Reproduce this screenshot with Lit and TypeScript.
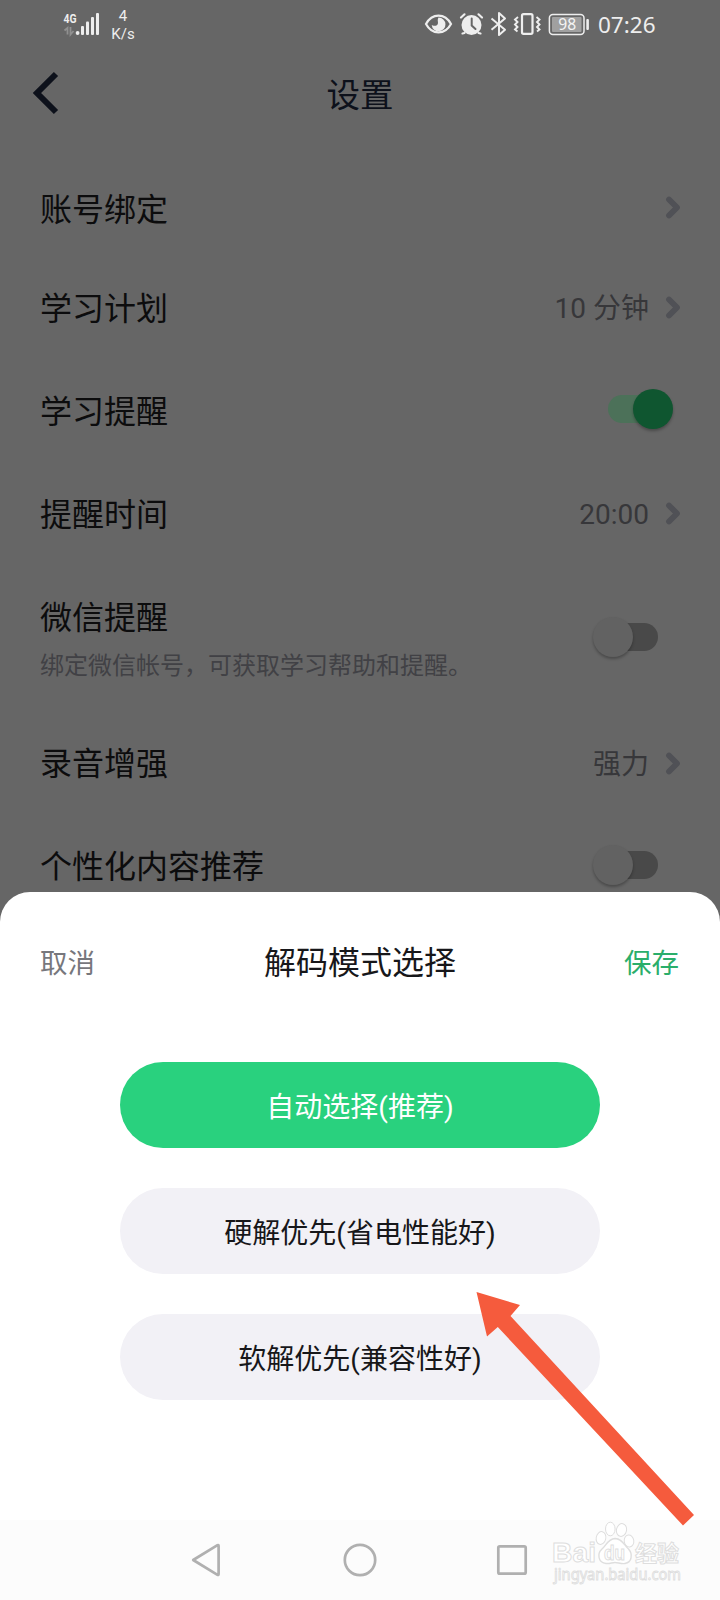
import { LitElement, html, css, nothing } from "lit";
import { customElement, property } from "lit/decorators.js";

@customElement("status-bar")
class StatusBar extends LitElement {
  static styles = css`
    :host { display: flex; height: 48px; align-items: flex-start; justify-content: space-between; color: #eee; }
    .left, .right { display: flex; align-items: flex-start; }
    .left { padding-left: 62px; }
    .right { padding-right: 65px; }
    svg { display: block; }
    .speed { width: 26px; margin: 7px 0 0 8px; font: 15px/18px Roboto, sans-serif; text-align: center; }
    .time { width: 57px; margin-left: 5px; font: 22.5px/30px "Noto Sans", sans-serif; padding-top: 10px; white-space: nowrap; }
    .net { font: bold 13px Roboto, sans-serif; }
    .pct { font: 16.5px "Noto Sans", sans-serif; }
  `;
  render() {
    return html`
      <div class="left">
        <svg width="40" height="48" viewBox="62 0 40 48" fill="#eee">
          <text class="net" x="63.5" y="23" textLength="13" lengthAdjust="spacingAndGlyphs">4G</text>
          <path d="M67.5 34.500V28L64.500 30.500M70.500 27V34.500L73.500 31" fill="none" stroke="#909090" stroke-width="1.800"/>
          <circle cx="77.600" cy="33" r="1.900"/>
          <rect x="81" y="26" width="3" height="9" rx="1"/>
          <rect x="86" y="21.500" width="3" height="13.500" rx="1"/>
          <rect x="91" y="17" width="3" height="18" rx="1"/>
          <rect x="96" y="13" width="3" height="22" rx="1"/>
        </svg>
        <div class="speed">4<br />K/s</div>
      </div>
      <div class="right">
        <svg width="31" height="48" viewBox="424 0 31 48">
          <path d="M426 24C432 12.800 445 12.800 451 24C445 35.200 432 35.200 426 24Z" fill="none" stroke="#eee" stroke-width="2.200"/>
          <path d="M438.500 17.500a6.900 6.900 0 1 1-6.800 7.500c1.500 1.300 6.300 1.300 6.300-2c0-2-.8-3.500.5-5.500z" fill="#eee"/>
        </svg>
        <svg width="33" height="48" viewBox="455 0 33 48" fill="none" stroke="#eee" stroke-width="2.200" stroke-linecap="round">
          <circle cx="471.500" cy="25" r="10" fill="#eee" stroke="none"/>
          <path d="M461 17.500l3.500-3.200M482 17.500l-3.500-3.200M464.500 33l-2 .5M478.500 33l2 .5"/>
          <path d="M471.700 18.500V25.500L475.500 29" stroke="#666" stroke-width="2"/>
        </svg>
        <svg width="22" height="48" viewBox="488 0 22 48" fill="none" stroke="#eee" stroke-width="2" stroke-linejoin="round">
          <path d="M491.500 18.500L505 29.800L499 35V13L505 18.500L491.500 29.800"/>
        </svg>
        <svg width="34" height="48" viewBox="510 0 34 48" fill="none" stroke="#eee">
          <rect x="522" y="14.200" width="10.500" height="19.600" rx="1.500" stroke-width="2.200"/>
          <path d="M518 17l-3 2.500l2.500 2.500l-2.500 2.500l2.500 2.500l-2.500 2.500l2.500 2M536.500 17l3 2.500l-2.500 2.500l2.500 2.500l-2.500 2.500l2.500 2.500l-2.500 2" stroke-width="1.900"/>
        </svg>
        <svg width="49" height="48" viewBox="544 0 49 48">
          <rect x="549.400" y="14.400" width="34.600" height="20" rx="3.500" fill="#666" stroke="#eee" stroke-width="1.500"/>
          <rect x="552" y="17" width="29.500" height="15" rx="1" fill="#a0a0a0"/>
          <rect x="586.300" y="19" width="2.600" height="11" rx="1" fill="#eee"/>
          <text class="pct" x="558.200" y="30" fill="#f4f4f4" textLength="18" lengthAdjust="spacingAndGlyphs">98</text>
        </svg>
        <div class="time">07:26</div>
      </div>
    `;
  }
}

@customElement("toggle-switch")
class ToggleSwitch extends LitElement {
  @property({ type: Boolean, reflect: true }) on = false;
  static styles = css`
    :host { display: flex; align-items: center; width: 63px; height: 28px; border-radius: 14px; background: #494949; margin: 0 22px 3px 0; }
    :host([on]) { background: #4c7159; justify-content: flex-end; margin-right: 10px; width: 62px; }
    .thumb { flex: none; width: 40px; height: 40px; border-radius: 50%; background: #626262; margin-left: -2px; box-shadow: 0 2px 3px rgba(0, 0, 0, 0.28); }
    :host([on]) .thumb { background: #0f5630; margin-right: -3px; }
  `;
  render() {
    return html`<div class="thumb"></div>`;
  }
}

interface Row {
  size: string;
  label: string;
  sub?: string;
  value?: string;
  toggle?: boolean;
}

const ROWS: Row[] = [
  { size: "first", label: "账号绑定", value: "" },
  { size: "second", label: "学习计划", value: "10 分钟" },
  { size: "third", label: "学习提醒", toggle: true },
  { size: "third", label: "提醒时间", value: "20:00" },
  { size: "tall", label: "微信提醒", sub: "绑定微信帐号，可获取学习帮助和提醒。", toggle: false },
  { size: "", label: "录音增强", value: "强力" },
  { size: "", label: "个性化内容推荐", toggle: false },
];

@customElement("app-root")
class AppRoot extends LitElement {
  static styles = css`
    :host { display: flex; flex-direction: column; position: relative; width: 720px; height: 1600px; overflow: hidden; background: #666; font-family: Roboto, "Noto Sans CJK SC", sans-serif; }
    svg { display: block; flex: none; }
    .header { display: grid; grid-template-columns: 80px 1fr 80px; align-items: center; height: 90px; color: #0d111b; }
    .header .back { margin-left: 30px; }
    .title { font-size: 33.5px; line-height: 48px; text-align: center; padding-top: 6px; }
    .list { height: 733px; padding: 0 40px; margin-top: 21px; overflow: hidden; }
    .row { display: flex; align-items: center; height: 103px; color: #0c0c0d; }
    .row.first { height: 98px; }
    .row.second { height: 102px; }
    .row.tall { height: 147px; }
    .text { flex: 1; padding-top: 1px; }
    .first .text { padding-top: 4px; }
    .second .text { padding-top: 2px; }
    .third .text { padding-top: 3px; }
    .label { font-size: 32px; line-height: 46px; }
    .sub { font-size: 24px; line-height: 34px; color: #414145; margin-top: 8px; }
    .tall .text { padding-top: 0; }
    .value { font-size: 28px; line-height: 40px; color: #37373a; margin-right: 15px; padding-top: 2px; }
    .sheet { height: 628px; border-radius: 30px 30px 0 0; background: #fff; }
    .bar { display: grid; grid-template-columns: 1fr auto 1fr; align-items: center; height: 140px; padding: 0 40px 3px; font-size: 27.5px; color: #77777c; box-sizing: border-box; }
    .bar .name { font-size: 32px; color: #17171a; padding-bottom: 2px; }
    .bar .save { text-align: right; color: #2bae6b; padding-right: 1px; }
    .options { display: flex; flex-direction: column; gap: 40px; padding: 30px 120px 0; }
    .option { display: flex; align-items: center; justify-content: center; height: 86px; border-radius: 43px; background: #f2f1f6; color: #17171a; font-size: 28px; line-height: 40px; padding-top: 5px; box-sizing: border-box; }
    .option.active { background: #29d17e; color: #fff; }
    .nav { height: 80px; background: #fcfcfc; }
    .pointer { position: absolute; left: 470px; top: 1285px; }
    .mark { position: absolute; left: 545px; top: 1518px; }
    .brand { font: bold 28px "Liberation Sans", sans-serif; }
    .brand-cn { font: bold 22px "Noto Sans CJK SC", sans-serif; }
    .du { font: bold 20px "Liberation Sans", sans-serif; }
    .site { font: 15.5px "Noto Sans", sans-serif; }
  `;

  private chevron() {
    return html`<svg width="16" height="24" viewBox="0 0 16 24" fill="none" stroke="#505156" stroke-width="5.800" stroke-linecap="round" stroke-linejoin="round">
      <path d="M5 3.500L13 11.500L5 19.500" />
    </svg>`;
  }

  private row(r: Row) {
    return html`<div class="row ${r.size}">
      <div class="text">
        <div class="label">${r.label}</div>
        ${r.sub ? html`<div class="sub">${r.sub}</div>` : nothing}
      </div>
      ${r.toggle === undefined
        ? html`<div class="value">${r.value}</div>${this.chevron()}`
        : html`<toggle-switch ?on=${r.toggle}></toggle-switch>`}
    </div>`;
  }

  render() {
    return html`
      <status-bar></status-bar>
      <div class="header">
        <svg class="back" width="32" height="48" viewBox="30 69 32 48" fill="none" stroke="#0d111b" stroke-width="6"><path d="M56 74L37 93L56 112" /></svg>
        <div class="title">设置</div>
      </div>
      <div class="list">${ROWS.map((r) => this.row(r))}</div>
      <div class="sheet">
        <div class="bar">
          <div>取消</div>
          <div class="name">解码模式选择</div>
          <div class="save">保存</div>
        </div>
        <div class="options">
          <div class="option active">自动选择(推荐)</div>
          <div class="option">硬解优先(省电性能好)</div>
          <div class="option">软解优先(兼容性好)</div>
        </div>
      </div>
      <div class="nav">
        <svg width="720" height="80" viewBox="0 1520 720 80" fill="none" stroke="#b0b0b0" stroke-width="2.700" stroke-linejoin="round">
          <path d="M193.200 1560L217.500 1545.200Q218.600 1544.600 218.600 1546V1574Q218.600 1575.400 217.500 1574.800Z" />
          <circle cx="360" cy="1560" r="15.200" />
          <rect x="498.300" y="1546.300" width="27.400" height="27.400" rx="1.500" />
        </svg>
      </div>
      <svg class="mark" width="150" height="72" viewBox="545 1518 150 72" fill="#fff" stroke="#dedede" stroke-width="1">
        <text class="brand" x="552" y="1562" textLength="44" lengthAdjust="spacingAndGlyphs">Bai</text>
        <ellipse cx="601" cy="1538" rx="4.800" ry="6.500" transform="rotate(12 601 1538)" />
        <ellipse cx="610.300" cy="1529" rx="4.800" ry="6.800" />
        <ellipse cx="621.500" cy="1530" rx="5" ry="6.500" transform="rotate(12 621.500 1530)" />
        <ellipse cx="629" cy="1541" rx="4.800" ry="6" transform="rotate(-8 629 1541)" />
        <path d="M615 1538.500C608 1539 606.500 1545 602 1549C596.500 1554 598.500 1563 606 1563.500C610 1563.800 612 1562.500 615 1562.500C618 1562.500 621 1564 625 1563.500C632 1562.500 633 1554 628.500 1549C624 1545 622 1538.500 615 1538.500Z" stroke-width="1.400" />
        <text class="du" x="604" y="1560" textLength="21" lengthAdjust="spacingAndGlyphs">du</text>
        <text class="brand-cn" x="635" y="1561" textLength="44" lengthAdjust="spacingAndGlyphs">经验</text>
        <text class="site" x="554" y="1580" textLength="127" lengthAdjust="spacingAndGlyphs" stroke-width="0.900">jingyan.baidu.com</text>
      </svg>
      <svg class="pointer" width="230" height="245" viewBox="470 1285 230 245" fill="#f55b3d">
        <path d="M476.500 1292L520 1305L510.500 1316L694 1515L683 1525.500L497.800 1327L487 1336.500Z" />
      </svg>
    `;
  }
}
